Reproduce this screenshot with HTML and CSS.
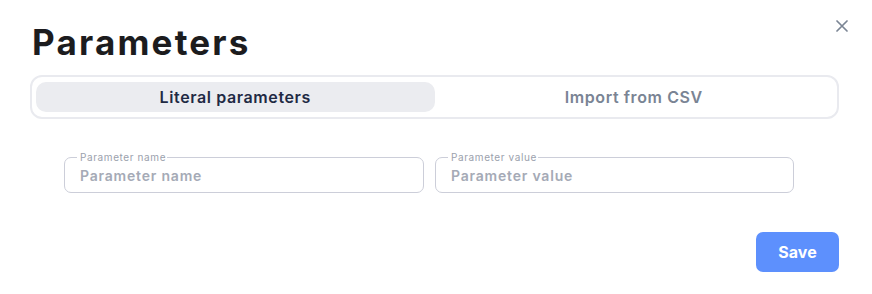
FILE: index.html
```html
<!DOCTYPE html>
<html>
<head>
<meta charset="utf-8">
<link rel="stylesheet" href="styles.css">
</head>
<body>
<div class="dialog">
  <div class="header">
    <h1 class="title">Parameters</h1>
    <button class="close" aria-label="Close">
      <svg width="12" height="12" viewBox="0 0 12 12"><path d="M1 1L11 11M11 1L1 11" stroke="#7b8594" stroke-width="1.7" stroke-linecap="round"/></svg>
    </button>
  </div>
  <div class="tabs">
    <div class="tab active">Literal parameters</div>
    <div class="tab">Import from CSV</div>
  </div>
  <div class="fields">
    <label class="field">
      <span class="legend">Parameter name</span>
      <span class="placeholder">Parameter name</span>
    </label>
    <label class="field">
      <span class="legend">Parameter value</span>
      <span class="placeholder">Parameter value</span>
    </label>
  </div>
  <div class="footer">
    <button class="save">Save</button>
  </div>
</div>
</body>
</html>
```
FILE: styles.css
```css
* { box-sizing: border-box; }
body {
  margin: 0;
  background: #ffffff;
  font-family: Inter, "DejaVu Sans", sans-serif;
}
.dialog {
  width: 872px;
  padding: 0 33px 0 30px;
}
.header {
  display: flex;
  justify-content: space-between;
  align-items: flex-start;
  height: 75px;
}
.title {
  margin: 20px 0 0 2px;
  font-size: 35px;
  line-height: 44px;
  font-weight: 700;
  color: #1c1c1e;
  letter-spacing: 2.2px;
}
.close {
  margin: 20px -9px 0 0;
  padding: 0;
  border: 0;
  background: none;
  width: 12px;
  height: 12px;
  display: flex;
}
.tabs {
  display: grid;
  grid-template-columns: 1fr 1fr;
  border: 2px solid #e9eaef;
  border-radius: 12px;
  padding: 5px 4px;
  height: 44px;
}
.tab {
  display: flex;
  align-items: center;
  justify-content: center;
  font-size: 16px;
  font-weight: 600;
  color: #7a8494;
  border-radius: 10px;
  letter-spacing: 0.6px;
}
.tab.active {
  background: #ebecf0;
  color: #1f2a44;
}
.fields {
  display: grid;
  grid-template-columns: 360px 359px;
  column-gap: 11px;
  margin: 38px 0 0 34px;
}
.field {
  position: relative;
  display: flex;
  align-items: center;
  height: 36px;
  border: 1px solid #ccced9;
  border-radius: 7px;
  padding: 0 15px 0;
}
.legend {
  position: absolute;
  left: 12px;
  top: -7px;
  padding: 0 1px 0 3px;
  background: #ffffff;
  font-size: 10px;
  line-height: 12px;
  color: #9ba1ad;
  letter-spacing: 0.6px;
}
.placeholder {
  font-size: 14px;
  font-weight: 600;
  color: #a5aab6;
  letter-spacing: 0.8px;
}
.footer {
  display: flex;
  justify-content: flex-end;
  margin-top: 39px;
}
.save {
  width: 83px;
  height: 40px;
  border: 0;
  border-radius: 7px;
  background: #5d90fd;
  color: #ffffff;
  font-family: inherit;
  font-size: 16px;
  font-weight: 700;
}
```
